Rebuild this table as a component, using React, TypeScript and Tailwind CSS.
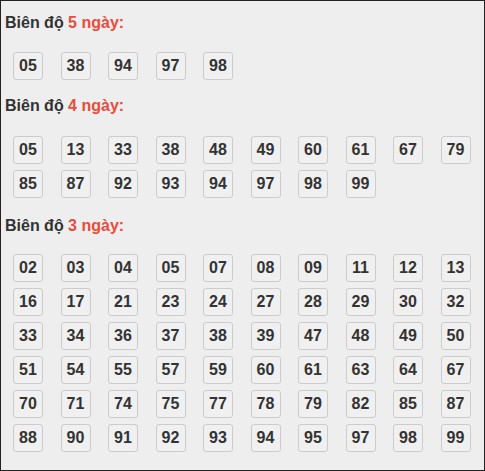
import React from "react";

const sections: { days: string; nums: string[]; hMt: string; gMt: string }[] = [
  { days: "5", nums: ["05", "38", "94", "97", "98"], hMt: "mt-[11px]", gMt: "mt-[19px]" },
  {
    days: "4",
    nums: ["05", "13", "33", "38", "48", "49", "60", "61", "67", "79", "85", "87", "92", "93", "94", "97", "98", "99"],
    hMt: "mt-[16px]",
    gMt: "mt-[20px]",
  },
  {
    days: "3",
    nums: [
      "02", "03", "04", "05", "07", "08", "09", "11", "12", "13",
      "16", "17", "21", "23", "24", "27", "28", "29", "30", "32",
      "33", "34", "36", "37", "38", "39", "47", "48", "49", "50",
      "51", "54", "55", "57", "59", "60", "61", "63", "64", "67",
      "70", "71", "74", "75", "77", "78", "79", "82", "85", "87",
      "88", "90", "91", "92", "93", "94", "95", "97", "98", "99",
    ],
    hMt: "mt-[18px]",
    gMt: "mt-[18px]",
  },
];

export default function App() {
  return (
    <div className="w-[485px] h-[471px] box-border border border-[#222] bg-[#eeeeee] pl-[4px] font-['Liberation_Sans',Arial,sans-serif] overflow-hidden">
      <div className="h-px" />
      {sections.map((s, i) => (
        <div key={i}>
          <h3 className={`${s.hMt} text-[16px] font-bold leading-[20px] text-[#333]`}>
            Biên độ <span className="text-[#e74c3c]">{s.days} ngày:</span>
          </h3>
          <div className={`${s.gMt} ml-[8px] grid grid-cols-[repeat(10,30px)] gap-x-[17.5px] gap-y-[6px]`}>
            {s.nums.map((n, j) => (
              <div
                key={j}
                className="w-[30px] h-[28px] box-border border border-[#cccccc] rounded-[3px] bg-[#f0f0f0] flex items-center justify-center text-[16px] font-bold text-[#333]"
              >
                {n}
              </div>
            ))}
          </div>
        </div>
      ))}
    </div>
  );
}
